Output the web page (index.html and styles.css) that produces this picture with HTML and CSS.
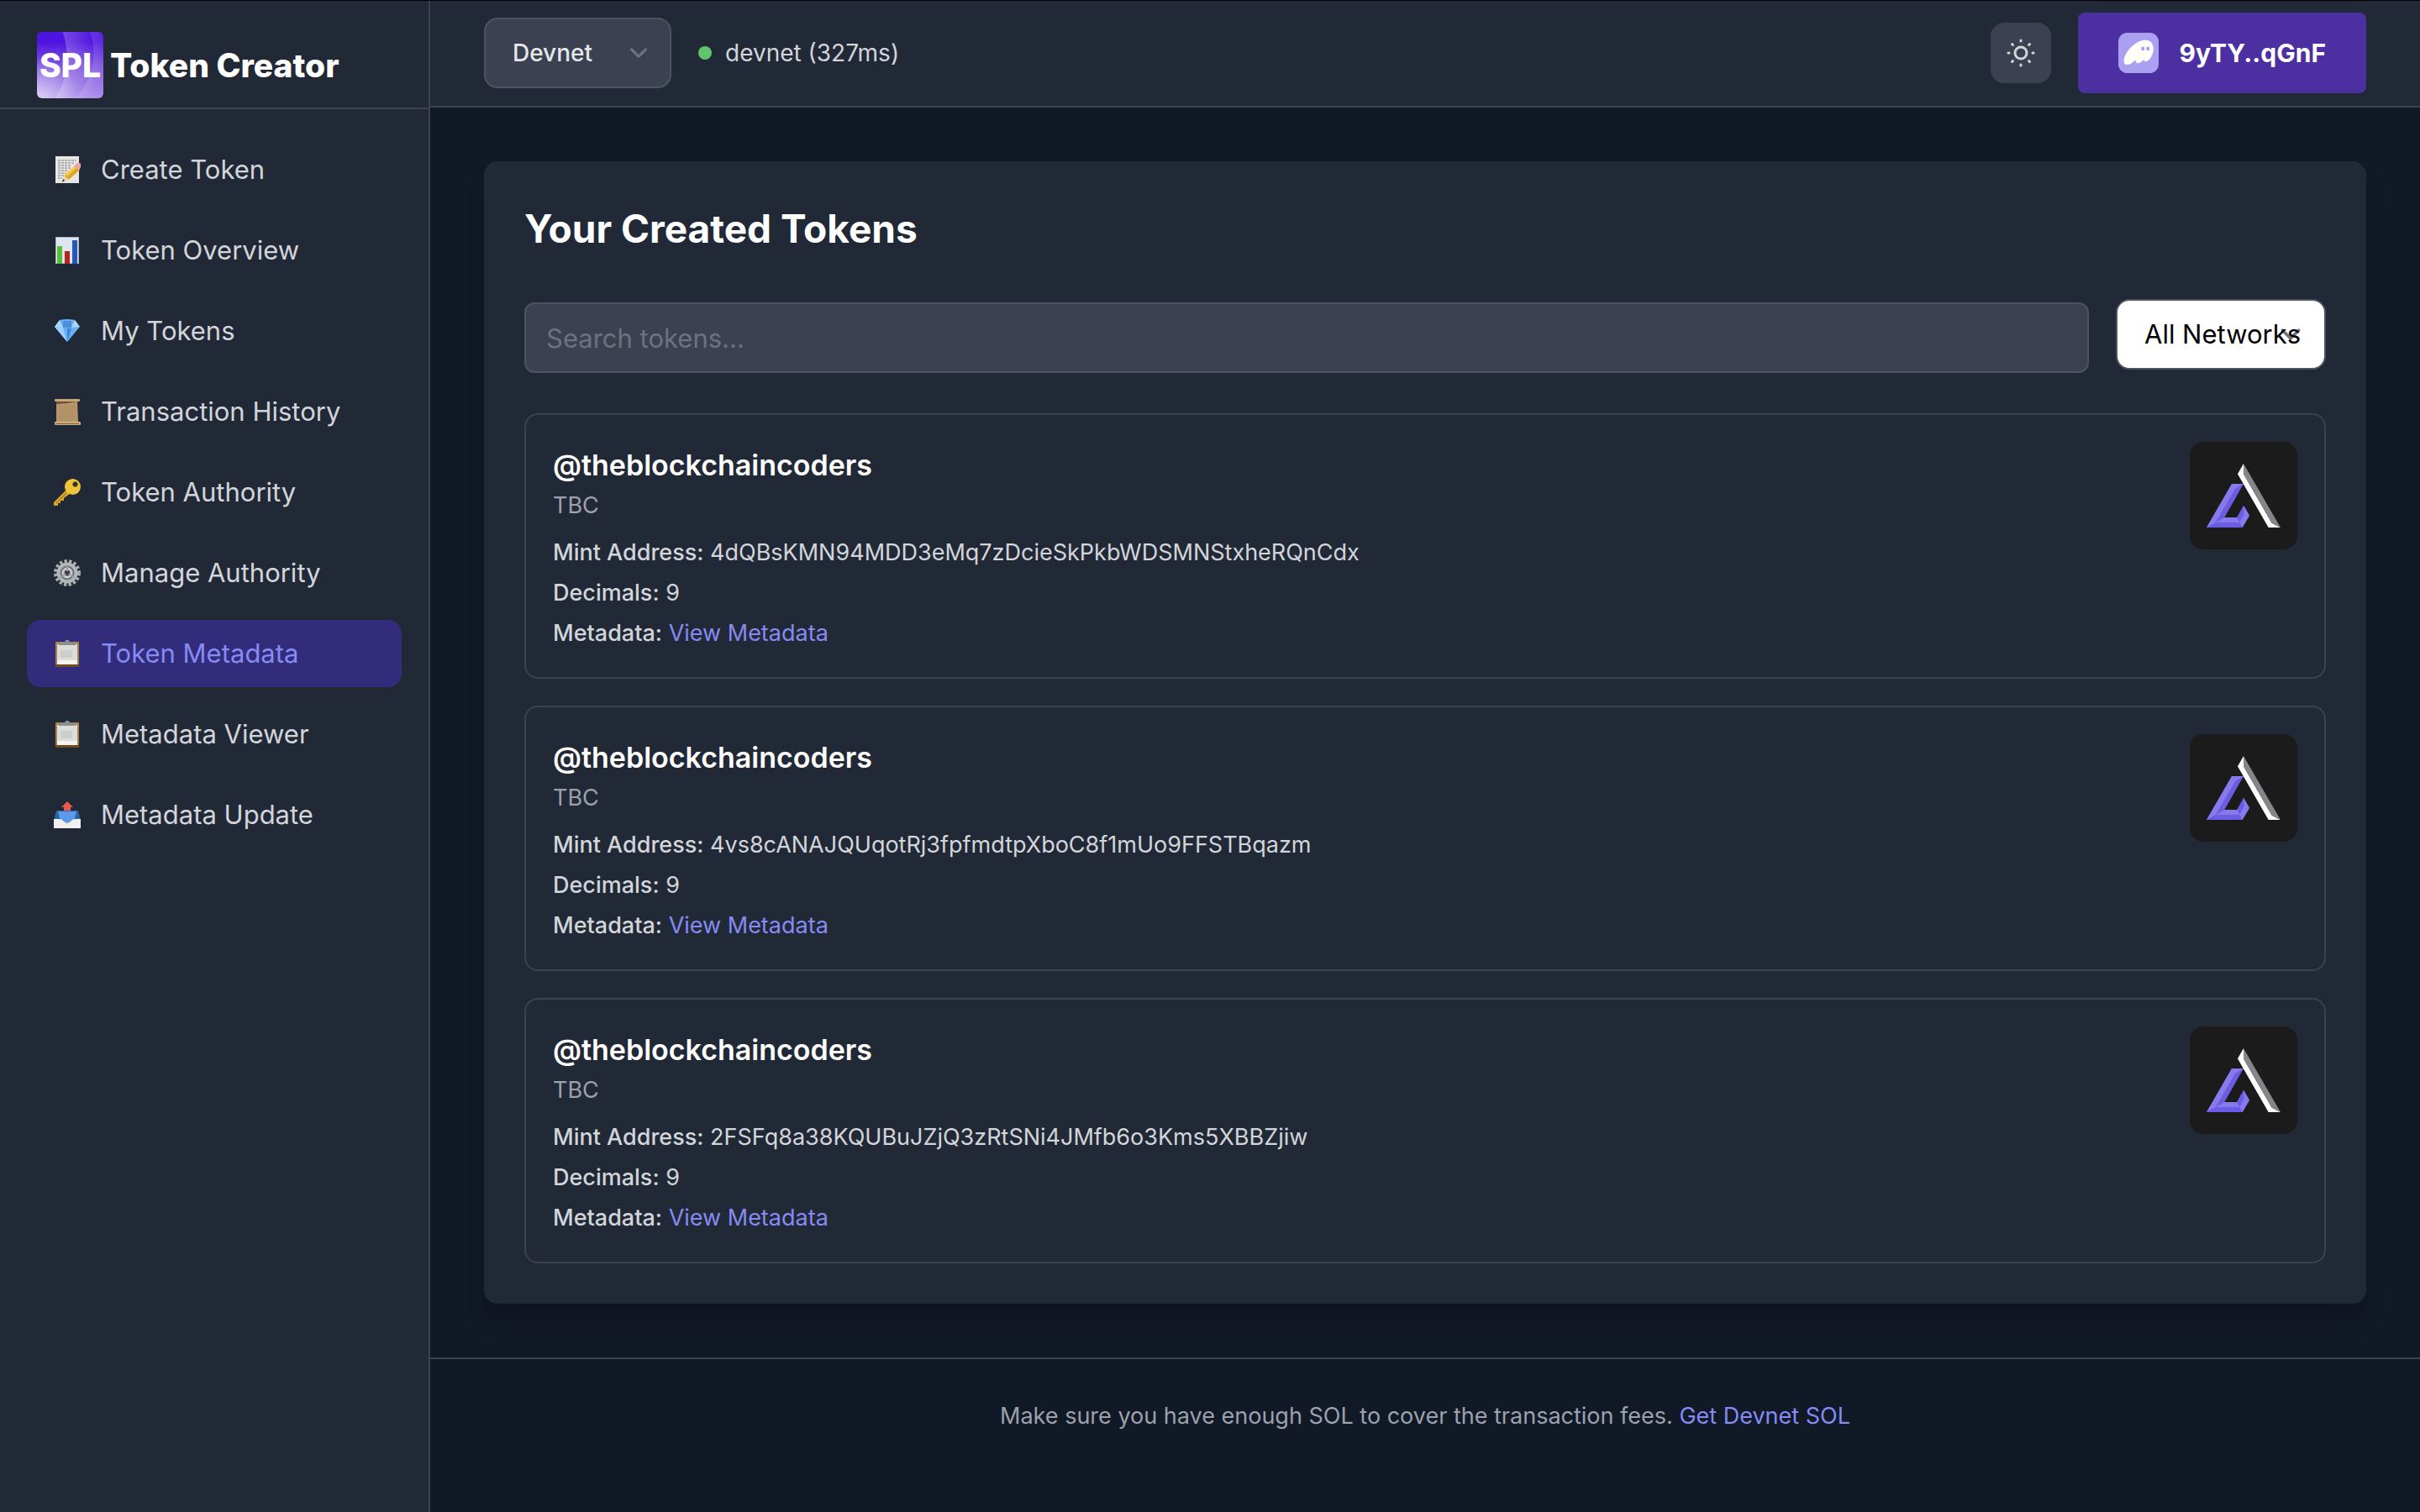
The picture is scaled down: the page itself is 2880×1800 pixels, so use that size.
FILE: index.html
```html
<!DOCTYPE html>
<html lang="en">
<head>
<meta charset="utf-8">
<title>SPL Token Creator</title>
<link rel="stylesheet" href="styles.css">
</head>
<body>
<svg class="defs" width="0" height="0" aria-hidden="true">
  <symbol id="token-logo" viewBox="0 0 384 384">
    <rect width="384" height="384" fill="#1b1b1b"/>
    <path fill="#6c5ce4" d="M60 306 150 150h42l-68 120h44l24-43 21 36-25 43z"/>
    <path fill="#877aea" d="M60 306 150 150h42l-30 18-70 120zM124 270h44l10 18H92zM192 227l21 36-25 43-10-18 16-30z"/>
    <path fill="#fff" d="M171 115 192 78v37l101 175 31 16h-43z"/>
    <path fill="#85868b" d="M192 78 324 306l-31-16L192 115z"/>
  </symbol>
  <symbol id="clipboard" viewBox="0 0 32 32">
    <rect x="2" y="2" width="28" height="30" rx="1" fill="#a8834a"/>
    <path fill="#6f4a1c" d="M2 29h28v3H2z"/>
    <path fill="#dcdcda" d="M4 5h24v24H4z"/>
    <path fill="#f3f3f2" d="M4 24h24v5H4z"/>
    <path fill="#cdcdcb" d="M8 12h14v9H8z"/>
    <path fill="#8b8f94" d="M6 3h6l2-2a2 2 0 0 1 4 0l2 2h6v3H6z"/>
  </symbol>
</svg>
<div class="app">
  <aside class="sidebar">
    <div class="brand">
      <span class="brand-mark">SPL</span>
      <span class="brand-name">Token Creator</span>
    </div>
    <nav class="nav">
      <a class="nav-item" href="#">
        <svg class="nav-icon" viewBox="0 0 32 32"><path fill="#e6e6e4" d="M2 0h28v32H2z"/><path stroke="#77787a" stroke-dasharray="3 1" d="M5 5h22M5 8h20M5 11h16M5 14h16M5 17h12M5 20h9M5 23h7M5 26h5"/><path fill="#e0a526" d="M11 29l3-8L26 11l5 5-12 11z"/><path fill="#f4cd4c" d="M14 21 26 11l2 2-12 11z"/><path fill="#e3a79b" d="M24 12l3-3a2 2 0 0 1 5 4l-2 4z"/><path fill="#ecd2a0" d="M10 31l3-8 5 5z"/><path fill="#3c3428" d="M10 31l1-4 2 2z"/></svg>
        Create Token</a>
      <a class="nav-item" href="#">
        <svg class="nav-icon" viewBox="0 0 32 32"><path fill="#dde6f0" d="M2 0h28v32H2z"/><path stroke="#aab4c0" fill="none" d="M2.500 .5h27v31h-27z"/><path fill="#58bd38" d="M4 11h6v21H4z"/><path fill="#b5241c" d="M13 17h6v15h-6z"/><path fill="#2358b8" d="M22 4h6v28h-6z"/></svg>
        Token Overview</a>
      <a class="nav-item" href="#">
        <svg class="nav-icon" viewBox="0 0 32 32"><path fill="#67b0f6" d="M1 11 7 3q9-2 18 0l6 8-15 18z"/><path fill="#a9d8fb" d="M1 11 7 3l4 9zM31 11l-6-8-4 9z"/><path fill="#4c8fd8" d="M11 4h10v8H11z"/><path fill="#3f86dc" d="M16 13h5l-5 16z"/><path fill="#9ccdfb" d="M1 11l10 1 5 17z"/></svg>
        My Tokens</a>
      <a class="nav-item" href="#">
        <svg class="nav-icon" viewBox="0 0 32 32"><path fill="#b8966b" d="M3 3h25l1 26H3z"/><path stroke="#a5845a" stroke-dasharray="2 1" d="M6 10h20M6 13h20M6 16h20M6 19h20M6 22h20M6 25h20"/><path fill="#6d5436" d="M3 4l25 0-12 2-13 1z"/><rect x="1" y="1" width="30" height="3" rx="1" fill="#c7a67a"/><rect x="1" y="28" width="31" height="4" rx="1" fill="#cfae82"/><path stroke="#7d6040" d="M2 30.500h28"/></svg>
        Transaction History</a>
      <a class="nav-item" href="#">
        <svg class="nav-icon" viewBox="0 0 32 32"><path fill="#d9a62c" d="M14 14 0 28v4h5v-3h3v-3h4v-3l7-5z"/><path stroke="#8e6512" d="M15 17 3 29"/><circle cx="22.500" cy="9.500" r="9.500" fill="#eec43c"/><circle cx="25.500" cy="6.500" r="3" fill="#222936" stroke="#a47a1a"/></svg>
        Token Authority</a>
      <a class="nav-item" href="#">
        <svg class="nav-icon" viewBox="0 0 32 32"><circle cx="16" cy="16" r="14" fill="none" stroke="#a9adb1" stroke-width="4" stroke-dasharray="3.300 2.340"/><circle cx="16" cy="16" r="10.500" fill="#6d7176" stroke="#b4b7ba" stroke-width="4"/><circle cx="16" cy="16" r="5" fill="#3c4047" stroke="#c9cbce" stroke-width="3"/><path stroke="#9da1a5" stroke-width="2" d="M16 16V6M16 16l9 6M16 16l-9 6"/><circle cx="16" cy="16" r="2" fill="#33373e"/></svg>
        Manage Authority</a>
      <a class="nav-item active" href="#" aria-current="page">
        <svg class="nav-icon"><use href="#clipboard"/></svg>
        Token Metadata</a>
      <a class="nav-item" href="#">
        <svg class="nav-icon"><use href="#clipboard"/></svg>
        Metadata Viewer</a>
      <a class="nav-item" href="#">
        <svg class="nav-icon" viewBox="0 0 32 32"><path fill="#2c65ab" d="M3 11h26l3 12H0z"/><path fill="#5a9ae6" d="M5 12h22l-3 11q-8 5-16 0z"/><path fill="#f0f0ef" d="M0 21h7q3 0 5 3 4 3 8 0 2-3 5-3h7v11H0z"/><path fill="#e8584c" d="M16 0l7 7h-3v4h-8V7H9z"/></svg>
        Metadata Update</a>
    </nav>
  </aside>

  <div class="content">
    <header class="topbar">
      <select class="select select-cluster" aria-label="Cluster"><option>Devnet</option></select>
      <span class="status"><span class="status-dot"></span>devnet (327ms)</span>
      <div class="actions">
        <button class="theme-toggle" type="button" aria-label="Toggle theme">
          <svg width="40" height="40" viewBox="0 0 40 40" fill="none" stroke="#d2d5da" stroke-width="3" stroke-linecap="round"><circle cx="20" cy="20" r="7"/><path d="M20 5v1M20 34v1M5 20h1M34 20h1M9.500 9.500l1 1M29.500 29.500l1 1M9.500 30.500l1-1M29.500 10.500l1-1"/></svg>
        </button>
        <button class="wallet" type="button">
          <svg width="48" height="48" viewBox="0 0 108 108"><rect width="108" height="108" rx="24" fill="#ab9ff2"/><path fill="#fffdf8" fill-rule="evenodd" d="M46.527 69.923C42.005 76.851 34.429 85.618 24.348 85.618 19.582 85.618 15 83.656 15 75.134 15 53.430 44.633 19.833 72.127 19.833 87.768 19.833 94 30.685 94 43.008 94 58.826 83.736 76.912 73.532 76.912 70.294 76.912 68.705 75.134 68.705 72.314 68.705 71.578 68.828 70.781 69.072 69.923 65.589 75.870 58.869 81.388 52.575 81.388 47.993 81.388 45.671 78.506 45.671 74.460 45.671 72.988 45.977 71.456 46.527 69.923ZM83.676 42.579C83.676 46.170 81.558 47.966 79.188 47.966 76.782 47.966 74.699 46.170 74.699 42.579 74.699 38.989 76.782 37.193 79.188 37.193 81.558 37.193 83.676 38.989 83.676 42.579ZM70.210 42.580C70.210 46.170 68.092 47.966 65.722 47.966 63.316 47.966 61.233 46.170 61.233 42.580 61.233 38.989 63.316 37.193 65.722 37.193 68.092 37.193 70.210 38.989 70.210 42.580Z"/></svg>
          9yTY..qGnF
        </button>
      </div>
    </header>

    <main class="main">
      <section class="panel">
        <h1 class="title">Your Created Tokens</h1>
        <div class="filters">
          <input class="search" type="text" placeholder="Search tokens..." aria-label="Search tokens">
          <select class="select select-network" aria-label="Network"><option>All Networks</option></select>
        </div>
        <div class="tokens">
          <article class="token">
            <div>
              <h2 class="token-name">@theblockchaincoders</h2>
              <p class="token-symbol">TBC</p>
              <div class="token-facts">
                <p><span class="key">Mint Address:</span> 4dQBsKMN94MDD3eMq7zDcieSkPkbWDSMNStxheRQnCdx</p>
                <p><span class="key">Decimals:</span> 9</p>
                <p><span class="key">Metadata:</span> <a class="link" href="#">View Metadata</a></p>
              </div>
            </div>
            <svg class="token-image" role="img" aria-label="TBC"><use href="#token-logo"/></svg>
          </article>
          <article class="token">
            <div>
              <h2 class="token-name">@theblockchaincoders</h2>
              <p class="token-symbol">TBC</p>
              <div class="token-facts">
                <p><span class="key">Mint Address:</span> 4vs8cANAJQUqotRj3fpfmdtpXboC8f1mUo9FFSTBqazm</p>
                <p><span class="key">Decimals:</span> 9</p>
                <p><span class="key">Metadata:</span> <a class="link" href="#">View Metadata</a></p>
              </div>
            </div>
            <svg class="token-image" role="img" aria-label="TBC"><use href="#token-logo"/></svg>
          </article>
          <article class="token">
            <div>
              <h2 class="token-name">@theblockchaincoders</h2>
              <p class="token-symbol">TBC</p>
              <div class="token-facts">
                <p><span class="key">Mint Address:</span> 2FSFq8a38KQUBuJZjQ3zRtSNi4JMfb6o3Kms5XBBZjiw</p>
                <p><span class="key">Decimals:</span> 9</p>
                <p><span class="key">Metadata:</span> <a class="link" href="#">View Metadata</a></p>
              </div>
            </div>
            <svg class="token-image" role="img" aria-label="TBC"><use href="#token-logo"/></svg>
          </article>
        </div>
      </section>
    </main>

    <footer class="footer">Make sure you have enough SOL to cover the transaction fees. <a class="link" href="#">Get Devnet SOL</a></footer>
  </div>
</div>
</body>
</html>
```
FILE: styles.css
```css
:root {
  --page: #111826;
  --surface: #222936;
  --raised: #3b4150;
  --line: #3b4150;
  --line-strong: #4c5462;
  --text: #d2d5da;
  --muted: #9ca1ad;
  --link: #858bf3;
}

*, *::before, *::after { box-sizing: border-box; }

body {
  margin: 0;
  background: var(--page);
  color: var(--text);
  font-family: Inter, "Liberation Sans", sans-serif;
  font-size: 27px;
  line-height: 40px;
}

h1, h2, p { margin: 0; }
a { text-decoration: none; }
button, input, select { font: inherit; color: inherit; margin: 0; }
svg { display: block; flex: none; }
.defs { position: absolute; }

.app {
  display: flex;
  min-height: 100vh;
  border-top: 1px solid #000;
}

/* Sidebar */
.sidebar {
  flex: none;
  width: 512px;
  background: var(--surface);
  border-right: 2px solid var(--line);
}

.brand {
  display: flex;
  align-items: center;
  gap: 8px;
  padding: 37px 44px 11px;
  border-bottom: 2px solid var(--line);
  color: #fff;
  font-size: 39px;
  font-weight: 800;
}

.brand-mark {
  width: 79px;
  height: 79px;
  border-radius: 6px;
  background:
    radial-gradient(circle at -60px 30px, transparent 95px, rgba(255, 255, 255, .22) 96px, transparent 130px),
    radial-gradient(circle at -10px 25px, transparent 77px, rgba(255, 255, 255, .14) 78px, transparent 100px),
    radial-gradient(circle at 0 100%, rgba(255, 255, 255, .6), transparent 50px),
    linear-gradient(to top, #ab8eea 0%, #8259e0 45%, #5014e0 85%);
  line-height: 79px;
  text-align: center;
}

.nav {
  display: grid;
  gap: 16px;
  padding: 32px;
}

.nav-item {
  display: flex;
  align-items: center;
  gap: 24px;
  padding: 16px 32px;
  border-radius: 16px;
  color: var(--text);
  font-size: 31px;
  line-height: 48px;
}

.nav-item.active { background: #322c7b; color: var(--link); }
.nav-icon { width: 32px; height: 32px; }

/* Top bar */
.content {
  flex: 1;
  min-width: 0;
}

.topbar {
  display: flex;
  align-items: center;
  gap: 32px;
  padding: 14px 64px 15px;
  background: var(--surface);
  border-bottom: 2px solid var(--line);
  font-size: 28px;
}

.select {
  appearance: none;
  height: 84px;
  padding: 0 16px 0 32px;
  border: 2px solid var(--line-strong);
  border-radius: 16px;
  background: var(--raised) url("data:image/svg+xml,%3Csvg xmlns='http://www.w3.org/2000/svg' fill='none' viewBox='0 0 20 20'%3E%3Cpath stroke='%236b7280' stroke-linecap='round' stroke-linejoin='round' stroke-width='1.5' d='M6 8l4 4 4-4'/%3E%3C/svg%3E") no-repeat right 16px center / 42px 42px;
}

.select-cluster { width: 223px; color: #e5e7eb; font-weight: 500; }

.select-network {
  width: 250px;
  background-color: #fff;
  background-size: 48px 48px;
  color: #000;
  font-size: 31px;
}

.status {
  display: flex;
  align-items: center;
  gap: 16px;
}

.status-dot {
  width: 16px;
  height: 16px;
  border-radius: 50%;
  background: #5fc56a;
}

.actions {
  display: flex;
  align-items: center;
  gap: 32px;
  margin-left: auto;
}

.theme-toggle {
  display: grid;
  place-items: center;
  width: 72px;
  height: 72px;
  padding: 0;
  border: 0;
  border-radius: 16px;
  background: var(--raised);
}

.wallet {
  display: flex;
  align-items: center;
  gap: 24px;
  height: 96px;
  padding: 0 48px;
  border: 0;
  border-radius: 8px;
  background: #4c2fa1;
  color: #fff;
  font-size: 30px;
  font-weight: 700;
}

/* Token list */
.main { padding: 64px; }

.panel {
  padding: 48px;
  border-radius: 16px;
  background: var(--surface);
  box-shadow: 0 20px 30px -6px rgba(0, 0, 0, .12), 0 8px 12px -8px rgba(0, 0, 0, .12);
}

.title {
  color: #fff;
  font-size: 46px;
  line-height: 64px;
  font-weight: 700;
}

.filters {
  display: flex;
  align-items: center;
  gap: 32px;
  margin: 48px 0;
}

.search {
  flex: 1;
  min-width: 0;
  height: 84px;
  margin-top: 8px;
  padding: 0 24px;
  border: 2px solid var(--line-strong);
  border-radius: 12px;
  background: var(--raised);
  font-size: 31px;
}

.search::placeholder { color: #6b7280; }

.tokens { display: grid; gap: 32px; }

.token {
  display: flex;
  justify-content: space-between;
  align-items: flex-start;
  padding: 32px;
  border: 2px solid var(--line);
  border-radius: 16px;
}

.token-name {
  color: #fff;
  font-size: 34px;
  line-height: 56px;
  font-weight: 600;
}

.token-symbol { color: var(--muted); }

.token-facts {
  display: grid;
  gap: 8px;
  margin-top: 16px;
}

.key { font-weight: 500; }
.link { color: var(--link); }

.token-image {
  width: 128px;
  height: 128px;
  border-radius: 16px;
}

.footer {
  padding: 48px 64px;
  border-top: 2px solid var(--line);
  color: var(--muted);
  text-align: center;
}
```
